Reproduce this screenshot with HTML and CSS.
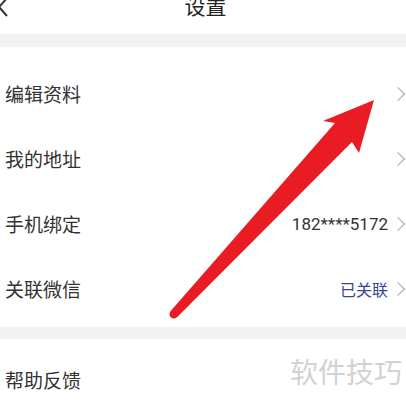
FILE: index.html
```html
<!DOCTYPE html>
<html>
<head>
<meta charset="utf-8">
<title>设置</title>
<link rel="stylesheet" href="styles.css">
</head>
<body>
	<!-- top bar -->
	<div class="topBar">
		<svg class="backIcon" width="12" height="20" viewBox="0 0 12 20">
			<polyline points="9,-3 0,7 8,16" fill="none" stroke="#333" stroke-width="2"/>
		</svg>
		<div class="topTitle">设置</div>
	</div>

	<div class="band"></div>

	<!-- account rows -->
	<div class="list listFirst">
		<div class="row">
			<span class="label">编辑资料</span>
			<span class="chev"></span>
		</div>
		<div class="row">
			<span class="label">我的地址</span>
			<span class="chev"></span>
		</div>
		<div class="row">
			<span class="label">手机绑定</span>
			<span class="value">182****5172</span>
			<span class="chev"></span>
		</div>
		<div class="row">
			<span class="label">关联微信</span>
			<span class="value linked">已关联</span>
			<span class="chev"></span>
		</div>
	</div>

	<div class="band band2"></div>

	<div class="list listSecond">
		<div class="row">
			<span class="label">帮助反馈</span>
		</div>
	</div>

	<!-- watermark + red arrow drawn over the page -->
	<div class="watermark">软件技巧</div>
	<svg class="arrow" width="406" height="406" viewBox="0 0 406 406">
		<path d="M170.7,310.9 L335,123 L323,121 L374,100 L359,153 L352,142 L177.3,317.1 A4.5,4.5 0 0 1 170.7,310.9 Z" fill="#e91c24"/>
	</svg>
</body>
</html>
```

FILE: styles.css
```css
body {
	margin: 0;
	width: 406px;
	height: 406px;
	overflow: hidden;
	position: relative;
	background-color: #fff;
	font-family: Roboto, "Noto Sans CJK SC", sans-serif;
	color: #333;
}

.topBar {
	height: 34px;
	display: flex;
	align-items: flex-start;
	position: relative;
}
.backIcon {
	margin-left: -1px;
	flex: none;
}
.topTitle {
	flex: 1;
	text-align: center;
	font-size: 21px;
	line-height: 21px;
	margin-top: -3px;
	margin-left: -6px;
	color: #222;
}

.band {
	height: 13px;
	background-color: #f2f2f2;
}
.band2 {
	height: 12px;
}

.listFirst {
	padding: 14px 0 6px;
}
.listSecond {
	padding-top: 8px;
}
.row {
	height: 65px;
	display: flex;
	align-items: center;
	padding: 0 0 0 5px;
}
.label {
	flex: 1;
	font-size: 19px;
	color: #333;
}
.value {
	font-size: 17px;
	color: #333;
	margin-right: 5px;
}
.linked {
	font-size: 16px;
	color: #36459a;
}
.chev {
	width: 9px;
	height: 9px;
	border-top: 1.5px solid #a8a8a8;
	border-right: 1.5px solid #a8a8a8;
	transform: rotate(45deg);
	margin-right: 3px;
	flex: none;
}

.watermark {
	position: absolute;
	right: 4px;
	top: 357px;
	font-size: 28px;
	line-height: 34px;
	color: #d2d2d2;
}
.arrow {
	position: absolute;
	left: 0;
	top: 0;
}
```
